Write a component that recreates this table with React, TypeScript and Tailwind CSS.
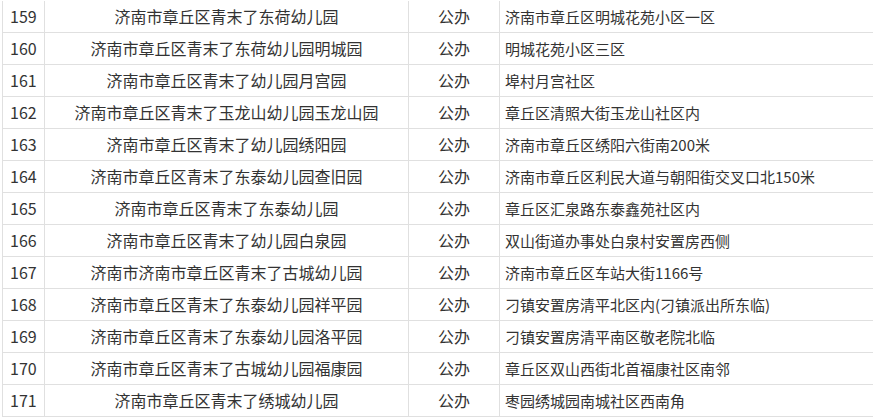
const rows: [string, string, string, string][] = [
  ["159", "济南市章丘区青末了东荷幼儿园", "公办", "济南市章丘区明城花苑小区一区"],
  ["160", "济南市章丘区青末了东荷幼儿园明城园", "公办", "明城花苑小区三区"],
  ["161", "济南市章丘区青末了幼儿园月宫园", "公办", "埠村月宫社区"],
  ["162", "济南市章丘区青末了玉龙山幼儿园玉龙山园", "公办", "章丘区清照大街玉龙山社区内"],
  ["163", "济南市章丘区青末了幼儿园绣阳园", "公办", "济南市章丘区绣阳六街南200米"],
  ["164", "济南市章丘区青末了东泰幼儿园查旧园", "公办", "济南市章丘区利民大道与朝阳街交叉口北150米"],
  ["165", "济南市章丘区青末了东泰幼儿园", "公办", "章丘区汇泉路东泰鑫苑社区内"],
  ["166", "济南市章丘区青末了幼儿园白泉园", "公办", "双山街道办事处白泉村安置房西侧"],
  ["167", "济南市济南市章丘区青末了古城幼儿园", "公办", "济南市章丘区车站大街1166号"],
  ["168", "济南市章丘区青末了东泰幼儿园祥平园", "公办", "刁镇安置房清平北区内(刁镇派出所东临)"],
  ["169", "济南市章丘区青末了东泰幼儿园洛平园", "公办", "刁镇安置房清平南区敬老院北临"],
  ["170", "济南市章丘区青末了古城幼儿园福康园", "公办", "章丘区双山西街北首福康社区南邻"],
  ["171", "济南市章丘区青末了绣城幼儿园", "公办", "枣园绣城园南城社区西南角"],
];

export default function App() {
  return (
    <div
      className="w-[873px] h-[419px] overflow-hidden bg-white pt-px text-[16px] text-[#333]"
      style={{ fontFamily: '"Noto Sans CJK SC", "Noto Sans", sans-serif' }}
    >
      <div className="ml-[2px] border-l border-[#e0e0e0]">
        {rows.map(([no, name, type, addr]) => (
          <div
            key={no}
            className="grid grid-cols-[42px_364px_91px_1fr] h-[32px] border-b border-[#e0e0e0] leading-[31px]"
          >
            <div className="border-r border-[#e0e0e0] pl-[7px] whitespace-nowrap">{no}</div>
            <div className="border-r border-[#e0e0e0] text-center whitespace-nowrap">{name}</div>
            <div className="border-r border-[#e0e0e0] text-center whitespace-nowrap">{type}</div>
            <div className="pl-[5px] text-[15px] whitespace-nowrap">{addr}</div>
          </div>
        ))}
      </div>
    </div>
  );
}
